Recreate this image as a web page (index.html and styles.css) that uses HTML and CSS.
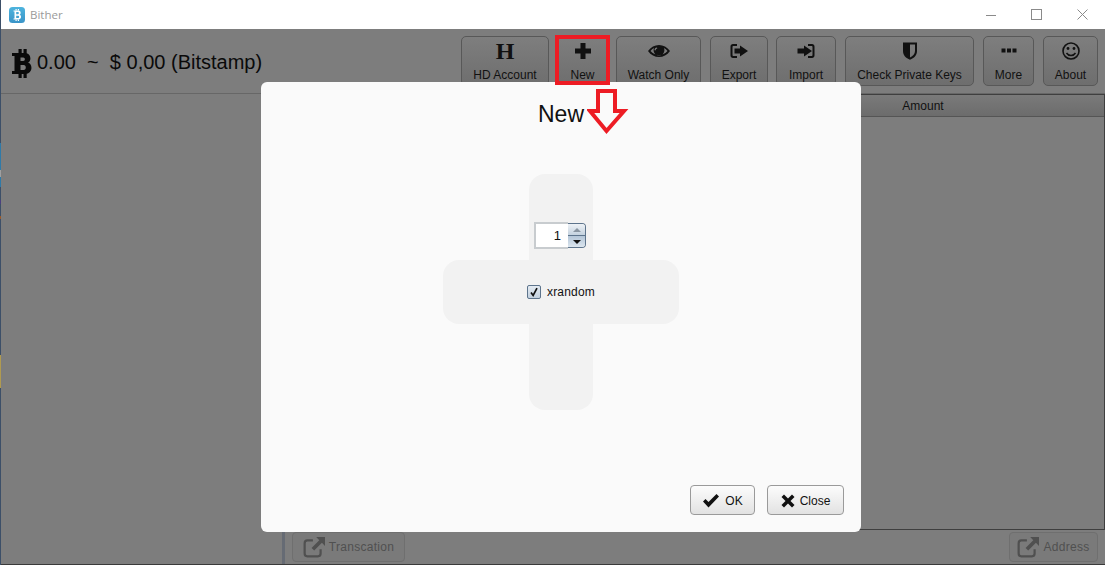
FILE: index.html
```html
<!DOCTYPE html>
<html lang="en">
<head>
    <meta charset="UTF-8">
    <title>Bither</title>
    <link rel="stylesheet" href="styles.css">
</head>
<body>
    <div class="desktop-edge"></div>
    <div class="window">
        <div class="titlebar">
            <svg class="app-icon" viewBox="0 0 16 16">
                <defs>
                    <linearGradient id="appBlue" x1="0" y1="0" x2="0" y2="1">
                        <stop offset="0" stop-color="#4db4de"/>
                        <stop offset="1" stop-color="#3a94c8"/>
                    </linearGradient>
                </defs>
                <rect width="16" height="16" rx="3.500" fill="url(#appBlue)"/>
                <path d="M6.500 2h1.200v1.500H6.500zM8.800 2H10v1.500H8.800zM6.500 12.500h1.200V14H6.500zM8.800 12.500H10V14H8.800z" fill="#fff"/>
                <path d="M4.500 3.500H9.500c2.600 0 2.900 3.600 1 4.300 2.400.5 2.100 4.700-1 4.700h-5v-1h1V4.500h-1zM7.200 5v2.200h1.800c1.200 0 1.200-2.200 0-2.200zM7.200 8.700V11h2c1.300 0 1.300-2.300 0-2.300z" fill="#fff" fill-rule="evenodd"/>
            </svg>
            <span class="app-name">Bither</span>
            <div class="win-controls">
                <svg width="10" height="10" viewBox="0 0 10 10"><path d="M0 5.500h10" stroke="#8a8a8a"/></svg>
                <svg width="11" height="11" viewBox="0 0 11 11"><rect x=".5" y=".5" width="10" height="10" fill="none" stroke="#8a8a8a"/></svg>
                <svg width="11" height="11" viewBox="0 0 11 11"><path d="M.5.500l10 10M10.500.500l-10 10" stroke="#8a8a8a"/></svg>
            </div>
        </div>

        <div class="header">
            <div class="ticker">
                <svg class="btc" viewBox="0 0 20 29">
                    <path d="M6.500 0h3.200v5H6.500zM11.500 0h3.200v5h-3.200zM6.500 24h3.200v5H6.500zM11.500 24h3.200v5h-3.200z"/>
                    <path fill-rule="evenodd" d="M0 4h13c6 0 7 7.800 3 9.500 5 1.200 5 11.500-3 11.500H0v-3h2.500V7H0zM8.500 8.500v3.500h2.700c2.200 0 2.200-3.500 0-3.500zM8.500 16v5h3.200c2.800 0 2.800-5 0-5z"/>
                </svg>
                <span>0.00&nbsp;&nbsp;~&nbsp;&nbsp;$ 0,00 (Bitstamp)</span>
            </div>
            <div class="toolbar">
                <div class="tool tool-hd">
                    <span class="tool-h">H</span>
                    <span>HD Account</span>
                </div>
                <div class="tool tool-new">
                    <svg class="tool-icon" viewBox="0 0 20 20"><path d="M7.500 2h5v5.500H18v5h-5.500V18h-5v-5.500H2v-5h5.500z"/></svg>
                    <span>New</span>
                </div>
                <div class="tool tool-watch">
                    <svg class="tool-icon tool-icon-wide" viewBox="0 0 24 20"><path fill-rule="evenodd" d="M1 10c5.500-8 16.500-8 22 0-5.500 8-16.500 8-22 0zM3.500 10c4.500 5.500 12.500 5.500 17 0-1-1.200-2.200-2.200-3.500-3 1.500 3.800-1.200 7.500-5 7.500S5.500 10.800 7 7c-1.300.8-2.500 1.800-3.500 3zM9.500 6.500c-1 0-2 1.200-2 2.300 0 .8 1.200.8 1.300 0 .1-.7.500-1 1-1.100.8-.1.600-1.200-.3-1.200z"/></svg>
                    <span>Watch Only</span>
                </div>
                <div class="tool tool-export">
                    <svg class="tool-icon" viewBox="0 0 20 20"><path d="M8 3H4C2.500 3 1.500 4 1.500 5.500v9C1.500 16 2.500 17 4 17h4v-2H4.500c-.6 0-1-.4-1-1V6c0-.6.4-1 1-1H8zM11 4.500l8 5.500-8 5.500V12.500H5.500v-5H11z"/></svg>
                    <span>Export</span>
                </div>
                <div class="tool tool-import">
                    <svg class="tool-icon" viewBox="0 0 20 20"><path d="M12 3h4c1.500 0 2.500 1 2.500 2.500v9c0 1.500-1 2.500-2.500 2.500h-4v-2h3.500c.6 0 1-.4 1-1V6c0-.6-.4-1-1-1H12zM8 4.500l8 5.500-8 5.500V12.500H1.500v-5H8z"/></svg>
                    <span>Import</span>
                </div>
                <div class="tool tool-check">
                    <svg class="tool-icon" viewBox="0 0 20 20"><path fill-rule="evenodd" d="M3 1.500h14V10c0 4.500-3 7-7 8.800C6 17 3 14.500 3 10zM10 3.500V16.500c3-1.500 5-3.500 5-6.500V3.500z"/></svg>
                    <span>Check Private Keys</span>
                </div>
                <div class="tool tool-more">
                    <svg class="tool-icon" viewBox="0 0 20 20"><path d="M2.500 7.500h4v4h-4zM8 7.500h4v4H8zM13.500 7.500h4v4h-4z"/></svg>
                    <span>More</span>
                </div>
                <div class="tool tool-about">
                    <svg class="tool-icon tool-icon-wide" viewBox="0 0 20 20"><circle cx="10" cy="10" r="8" fill="none" stroke="#111" stroke-width="1.600"/><circle cx="7" cy="7.500" r="1.400"/><circle cx="13" cy="7.500" r="1.400"/><path d="M5.500 12c2 3.200 7 3.200 9 0" fill="none" stroke="#111" stroke-width="1.500"/></svg>
                    <span>About</span>
                </div>
            </div>
        </div>

        <div class="main">
            <div class="sidebar"></div>
            <div class="content">
                <div class="table">
                    <div class="table-head">Amount</div>
                </div>
                <div class="footer">
                    <div class="foot-btn foot-tx">
                        <svg class="foot-icon" viewBox="0 0 20 20"><path d="M9 4H4C2.500 4 1.500 5 1.500 6.500v9.500c0 1.500 1 2.500 2.500 2.500h9.500c1.500 0 2.500-1 2.500-2.500v-4" fill="none" stroke="#505050" stroke-width="2"/><path d="M12 1h8v8l-2.800-2.800-7 7-2.400-2.400 7-7z" fill="#505050"/></svg>
                        <span>Transcation</span>
                    </div>
                    <div class="foot-btn foot-addr">
                        <svg class="foot-icon" viewBox="0 0 20 20"><path d="M9 4H4C2.500 4 1.500 5 1.500 6.500v9.500c0 1.500 1 2.500 2.500 2.500h9.500c1.500 0 2.500-1 2.500-2.500v-4" fill="none" stroke="#505050" stroke-width="2"/><path d="M12 1h8v8l-2.800-2.800-7 7-2.400-2.400 7-7z" fill="#505050"/></svg>
                        <span>Address</span>
                    </div>
                </div>
            </div>
        </div>

        <div class="dialog">
            <div class="dialog-title">New</div>
            <div class="cross">
                <div class="cross-top">
                    <div class="spinner">
                        <div class="spinner-value">1</div>
                        <div class="spinner-arrows">
                            <div class="arrow-up"></div>
                            <div class="arrow-down"></div>
                        </div>
                    </div>
                </div>
                <div class="cross-mid">
                    <div class="checkbox">
                        <svg viewBox="0 0 14 14"><path d="M3.500 7.500l2.500 3.500L10.500 2.500" fill="none" stroke="#111" stroke-width="2"/></svg>
                    </div>
                    <span class="check-label">xrandom</span>
                </div>
                <div class="cross-bottom"></div>
            </div>
            <div class="dialog-footer">
                <div class="dlg-btn dlg-ok">
                    <svg class="dlg-icon" viewBox="0 0 18 14"><path d="M1 7.500L3.500 5l3 3L14.500 0 17 2.500 6.500 13.500z"/></svg>
                    <span>OK</span>
                </div>
                <div class="dlg-btn dlg-close">
                    <svg class="dlg-icon dlg-icon-x" viewBox="0 0 14 14"><path d="M3 .5L7 4.500 11 .5 13.500 3 9.500 7l4 4L11 13.500l-4-4-4 4L.5 11l4-4-4-4z"/></svg>
                    <span>Close</span>
                </div>
            </div>
        </div>

        <!-- annotation drawn on the screenshot -->
        <div class="mark-box"></div>
        <svg class="mark-arrow" viewBox="0 0 44 48">
            <path d="M11 3h17v20h9L19.500 43 3 23h8z" fill="none" stroke="#ed1c24" stroke-width="4"/>
        </svg>
    </div>
</body>
</html>
```

FILE: styles.css
```css
* {
    box-sizing: border-box;
}
html, body {
    height: 100%;
}
body {
    margin: 0;
    display: flex;
    overflow: hidden;
    font-family: "Liberation Sans", Arial, sans-serif;
    font-size: 12px;
    color: #111;
    background: #7d7d7d;
}
.desktop-edge {
    width: 1px;
    background: linear-gradient(to bottom,
        #3c4f68 0, #3c4f68 143px,
        #2f7aa8 143px, #2f7aa8 170px,
        #a0a0a0 170px, #a0a0a0 177px,
        #2f7aa8 177px, #2f7aa8 187px,
        #3c4f68 187px, #3c4f68 200px,
        #4a3f80 200px, #4a3f80 204px,
        #3c4f68 204px, #3c4f68 216px,
        #9a5a2a 216px, #9a5a2a 219px,
        #3c4f68 219px, #3c4f68 355px,
        #b09a50 355px, #b09a50 388px,
        #3c4f68 388px);
}
.window {
    position: relative;
    flex: 1;
    display: flex;
    flex-direction: column;
}

/* title bar */
.titlebar {
    height: 29px;
    flex-shrink: 0;
    background: #fff;
    display: flex;
    align-items: center;
    padding-left: 8px;
}
.app-icon {
    width: 16px;
    height: 16px;
    margin-right: 5px;
}
.app-name {
    font-family: "Open Sans", sans-serif;
    font-size: 11.500px;
    color: #9a9a9a;
}
.win-controls {
    margin-left: auto;
    display: flex;
    align-items: center;
    gap: 35px;
    padding-right: 17px;
}

/* header */
.header {
    height: 65px;
    flex-shrink: 0;
    display: flex;
    border-bottom: 1px solid #676767;
    padding-top: 7px;
}
.ticker {
    display: flex;
    align-items: center;
    font-size: 20px;
    height: 50px;
    padding-left: 11px;
    margin-top: 1px;
    color: #0a0a0a;
}
.btc {
    width: 20px;
    height: 29px;
    margin-right: 5px;
    margin-top: 2px;
    fill: #0a0a0a;
}
.toolbar {
    margin-left: auto;
    display: flex;
    padding-right: 7px;
}
.tool {
    height: 50px;
    border: 1px solid #585858;
    border-radius: 5px;
    background: linear-gradient(to bottom, #7e7e7e, #6e6e6e);
    display: flex;
    flex-direction: column;
    align-items: center;
    justify-content: flex-end;
    padding-bottom: 3px;
    color: #111;
}
.tool-icon {
    width: 20px;
    height: 20px;
    margin-bottom: 7px;
    fill: #111;
}
.tool-icon-wide {
    width: 24px;
}
.tool-h {
    font-family: "Liberation Serif", serif;
    font-weight: bold;
    font-size: 24px;
    line-height: 24px;
    margin-bottom: 5px;
}
.tool-hd { width: 88px; }
.tool-new { width: 53px; margin-left: 7px; }
.tool-watch { width: 85px; margin-left: 7px; }
.tool-export { width: 58px; margin-left: 9px; }
.tool-import { width: 60px; margin-left: 8px; }
.tool-check { width: 129px; margin-left: 9px; }
.tool-more { width: 51px; margin-left: 9px; }
.tool-about { width: 55px; margin-left: 9px; }

/* main area behind the dialog */
.main {
    flex: 1;
    display: flex;
    min-height: 0;
    border-bottom: 1px solid #3a3a3a;
}
.sidebar {
    width: 284px;
    border-right: 3px solid #666b74;
}
.content {
    flex: 1;
    display: flex;
    flex-direction: column;
}
.table {
    flex: 1;
    border: 1px solid #3f3f3f;
    border-left: none;
}
.table-head {
    height: 22px;
    line-height: 22px;
    background: linear-gradient(to bottom, #7a7a7a, #6c6c6c);
    border-bottom: 1px solid #555;
    text-align: center;
    padding-left: 457px;
    color: #111;
}
.footer {
    height: 34px;
    flex-shrink: 0;
    display: flex;
    justify-content: space-between;
    padding: 2px 7px;
}
.foot-btn {
    height: 30px;
    border: 1px solid #6f6f6f;
    border-radius: 4px;
    background: #7a7a7a;
    display: flex;
    align-items: center;
    justify-content: center;
    gap: 4px;
    letter-spacing: .3px;
    color: #505050;
}
.foot-icon {
    width: 22px;
    height: 22px;
}
.foot-tx { width: 113px; }
.foot-addr { width: 89px; }

/* dialog */
.dialog {
    position: absolute;
    left: 260px;
    top: 82px;
    width: 600px;
    height: 450px;
    background: #fafafa;
    border-radius: 6px;
    display: flex;
    flex-direction: column;
    align-items: center;
}
.dialog-title {
    font-size: 23px;
    line-height: 26px;
    margin-top: 19px;
    color: #111;
}
.cross {
    margin-top: 47px;
    display: flex;
    flex-direction: column;
    align-items: center;
}
.cross-top, .cross-bottom {
    width: 64px;
    height: 86px;
    background: #f2f2f2;
}
.cross-top {
    border-radius: 16px 16px 0 0;
    display: flex;
    justify-content: center;
    padding-top: 48px;
}
.cross-bottom {
    border-radius: 0 0 16px 16px;
}
.cross-mid {
    width: 236px;
    height: 64px;
    background: #f2f2f2;
    border-radius: 16px;
    display: flex;
    align-items: center;
    justify-content: center;
    gap: 6px;
    color: #111;
}
.check-label {
    letter-spacing: .2px;
}
.spinner {
    display: flex;
    height: 27px;
    margin-left: -2px;
}
.spinner-value {
    width: 34px;
    height: 27px;
    background: #fff;
    border: 2px solid #c8cccf;
    border-right: none;
    text-align: right;
    padding-right: 7px;
    line-height: 23px;
    font-size: 13px;
    color: #111;
}
.spinner-arrows {
    width: 18px;
    height: 25px;
    margin-top: 1px;
    border: 1px solid #5d748c;
    border-left: none;
    border-radius: 0 4px 4px 0;
    overflow: hidden;
    display: flex;
    flex-direction: column;
}
.arrow-up, .arrow-down {
    flex: 1;
    display: flex;
    align-items: center;
    justify-content: center;
    background: linear-gradient(to bottom, #eef2f6, #c4d2df);
}
.arrow-down {
    background: linear-gradient(to bottom, #b4c6d8, #dbe5ee);
    border-top: 1px solid #5d748c;
}
.arrow-up::after {
    content: "";
    border: 4px solid transparent;
    border-top: none;
    border-bottom: 4px solid #8a96a2;
}
.arrow-down::after {
    content: "";
    border: 4px solid transparent;
    border-bottom: none;
    border-top: 4px solid #111;
}
.checkbox {
    width: 14px;
    height: 14px;
    border: 1px solid #5d748c;
    border-radius: 2px;
    background: linear-gradient(to bottom, #e4ebf2, #c2d0de);
}
.checkbox svg {
    display: block;
    width: 12px;
    height: 12px;
}
.dialog-footer {
    margin-top: auto;
    align-self: flex-end;
    display: flex;
    gap: 12px;
    padding: 0 17px 17px 0;
}
.dlg-btn {
    height: 30px;
    border: 1px solid #9a9a9a;
    border-radius: 4px;
    background: linear-gradient(to bottom, #fcfcfc, #e2e2e2);
    display: flex;
    align-items: center;
    justify-content: center;
    gap: 5px;
    padding-top: 1px;
    color: #111;
}
.dlg-icon {
    width: 18px;
    height: 14px;
    fill: #111;
}
.dlg-icon-x {
    width: 14px;
}
.dlg-ok { width: 65px; }
.dlg-close { width: 77px; }

/* red annotation */
.mark-box {
    position: absolute;
    left: 554px;
    top: 35px;
    width: 55px;
    height: 50px;
    border: 4px solid #ed1c24;
}
.mark-arrow {
    position: absolute;
    left: 586px;
    top: 88px;
    width: 44px;
    height: 48px;
}
```
